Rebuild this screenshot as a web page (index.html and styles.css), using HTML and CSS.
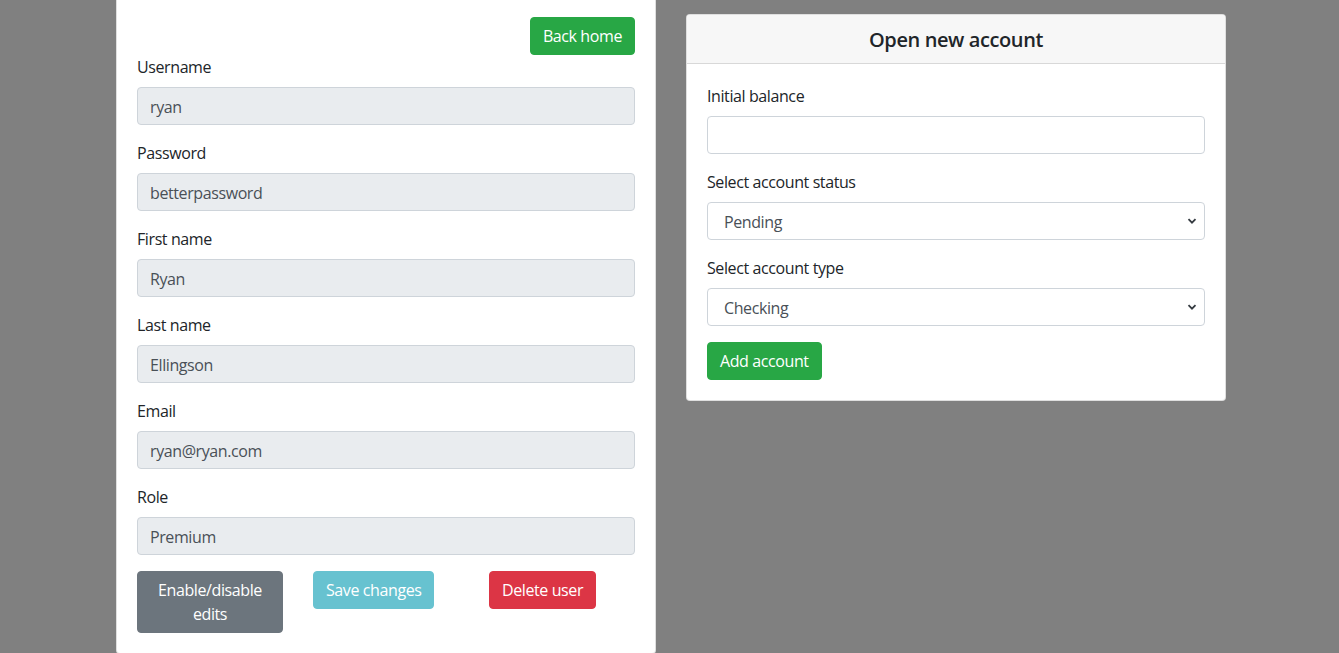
FILE: index.html
```html
<!DOCTYPE html>
<html lang="en">
<head>
<meta charset="utf-8">
<title>Edit user</title>
<link rel="stylesheet" href="styles.css">
</head>
<body>
<div class="page">
  <div class="card user-card">
    <div class="card-body">
      <div class="top-actions">
        <button class="btn btn-success">Back home</button>
      </div>
      <div class="form-group">
        <label>Username</label>
        <input class="form-control" value="ryan" disabled>
      </div>
      <div class="form-group">
        <label>Password</label>
        <input class="form-control" value="betterpassword" disabled>
      </div>
      <div class="form-group">
        <label>First name</label>
        <input class="form-control" value="Ryan" disabled>
      </div>
      <div class="form-group">
        <label>Last name</label>
        <input class="form-control" value="Ellingson" disabled>
      </div>
      <div class="form-group">
        <label>Email</label>
        <input class="form-control" value="ryan@ryan.com" disabled>
      </div>
      <div class="form-group">
        <label>Role</label>
        <input class="form-control" value="Premium" disabled>
      </div>
      <div class="btn-row">
        <div><button class="btn btn-secondary btn-block">Enable/disable edits</button></div>
        <div><button class="btn btn-info" disabled>Save changes</button></div>
        <div><button class="btn btn-danger">Delete user</button></div>
      </div>
    </div>
  </div>

  <div class="card account-card">
    <div class="card-header">Open new account</div>
    <div class="card-body">
      <div class="form-group">
        <label>Initial balance</label>
        <input class="form-control" value="">
      </div>
      <div class="form-group">
        <label>Select account status</label>
        <div class="select-wrap">
          <select class="form-control">
            <option>Pending</option>
            <option>Open</option>
            <option>Closed</option>
          </select>
          <svg class="chevron" width="10" height="10" viewBox="0 0 10 10"><path d="M1.5 3.2 L5 6.7 L8.5 3.2" fill="none" stroke="#343a40" stroke-width="1.8"/></svg>
        </div>
      </div>
      <div class="form-group">
        <label>Select account type</label>
        <div class="select-wrap">
          <select class="form-control">
            <option>Checking</option>
            <option>Savings</option>
          </select>
          <svg class="chevron" width="10" height="10" viewBox="0 0 10 10"><path d="M1.5 3.2 L5 6.7 L8.5 3.2" fill="none" stroke="#343a40" stroke-width="1.8"/></svg>
        </div>
      </div>
      <button class="btn btn-success">Add account</button>
    </div>
  </div>
</div>
</body>
</html>
```

FILE: styles.css
```css
* { box-sizing: border-box; }
html, body { margin: 0; padding: 0; }
body {
  background: #808080;
  font-family: "Open Sans", "Noto Sans", sans-serif;
  font-size: 16px;
  line-height: 1.5;
  letter-spacing: -0.4px;
  color: #212529;
  height: 653px;
  overflow: hidden;
}
.page {
  display: flex;
  align-items: flex-start;
  gap: 30px;
  padding-left: 116px;
}
.card {
  background: #fff;
  border: 1px solid rgba(0,0,0,.125);
  border-radius: 4px;
  width: 540px;
}
.user-card { margin-top: -4px; }
.account-card { margin-top: 14px; }
.card-body { padding: 20px; }
.card-header {
  background: #f7f7f7;
  border-bottom: 1px solid rgba(0,0,0,.125);
  padding: 13px 20px 11px;
  font-size: 20px;
  font-weight: 600;
  line-height: 1.2;
  text-align: center;
  border-radius: 3px 3px 0 0;
}
.top-actions { display: flex; justify-content: flex-end; }
.form-group { margin-bottom: 16px; }
label { display: inline-block; margin-bottom: 8px; }
.form-control {
  display: block;
  width: 100%;
  height: 38px;
  padding: 7px 12px 5px;
  font-family: inherit;
  font-size: 16px;
  line-height: 1.5;
  letter-spacing: inherit;
  color: #495057;
  background: #fff;
  border: 1px solid #ced4da;
  border-radius: 4px;
  margin: 0;
}
.form-control:disabled { background: #e9ecef; opacity: 1; }
.select-wrap { position: relative; }
select.form-control { appearance: none; -webkit-appearance: none; padding-left: 16px; }
.chevron { position: absolute; right: 8px; top: 14px; pointer-events: none; }
.btn {
  display: inline-block;
  font-family: inherit;
  font-size: 16px;
  line-height: 1.5;
  letter-spacing: inherit;
  padding: 6px 12px;
  border: 1px solid transparent;
  border-radius: 4px;
  color: #fff;
  text-align: center;
  cursor: pointer;
}
.btn-success { background: #28a745; border-color: #28a745; }
.btn-secondary { background: #6c757d; border-color: #6c757d; }
.btn-info { background: #17a2b8; border-color: #17a2b8; }
.btn-info:disabled { opacity: .65; cursor: default; }
.btn-danger { background: #dc3545; border-color: #dc3545; }
.btn-block { width: 100%; }
.btn-row {
  display: grid;
  grid-template-columns: 1fr 1fr 1fr;
  gap: 30px;
  align-items: start;
}
```
